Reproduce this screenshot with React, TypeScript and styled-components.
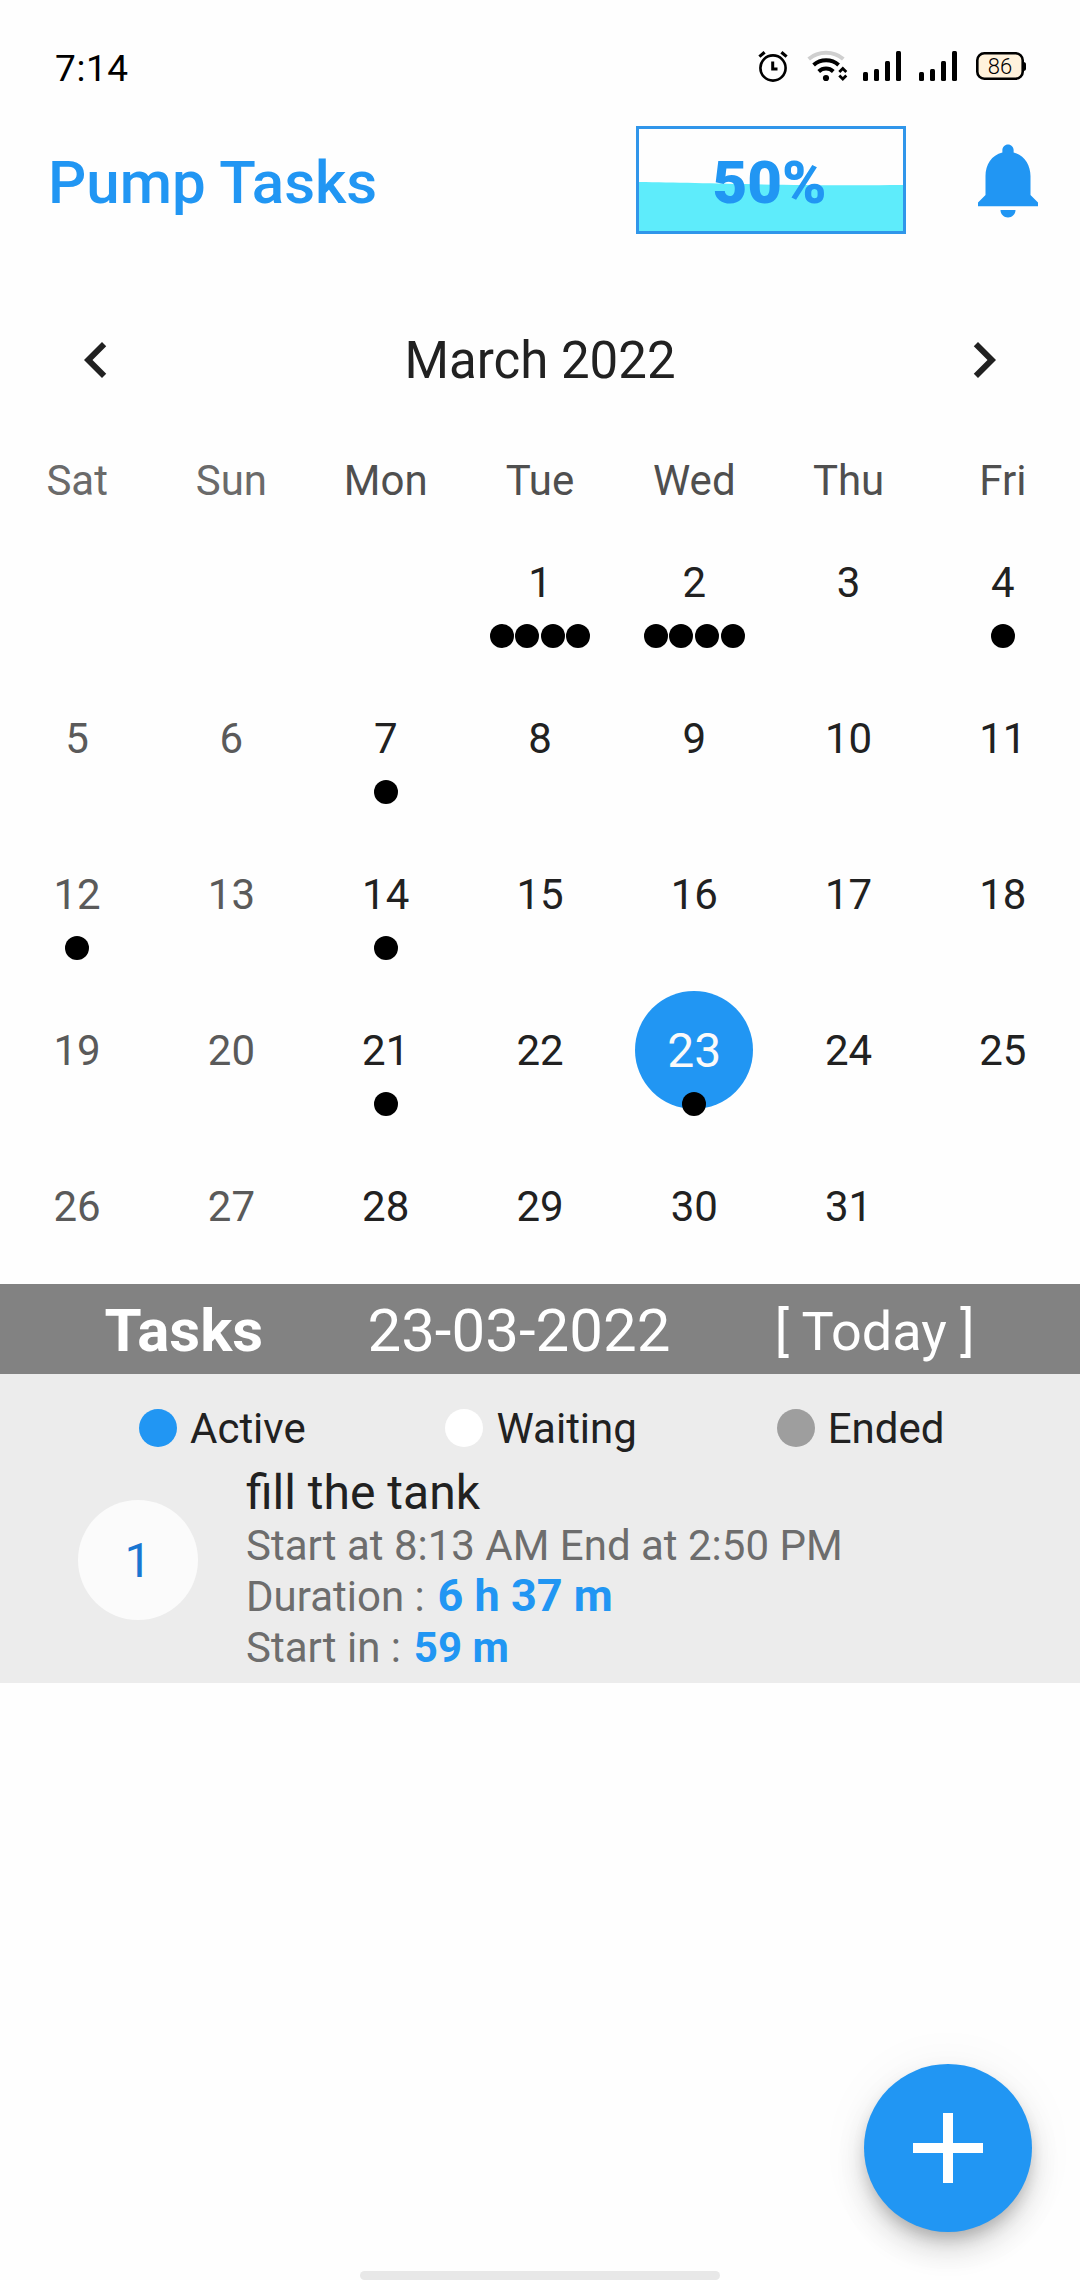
import React from 'react';
import styled, { createGlobalStyle } from 'styled-components';

const BLUE = '#2196f3';
const INK = '#212121';

const GlobalStyle = createGlobalStyle`
  * { box-sizing: border-box; }
  body { margin: 0; background: #fefefe; font-family: Roboto, "Liberation Sans", sans-serif; }
`;

const Screen = styled.div`
  position: relative;
  display: flex;
  flex-direction: column;
  width: 1080px;
  height: 2280px;
  overflow: hidden;
  background: #fefefe;
  color: ${INK};
`;

const StatusBar = styled.header`
  display: flex;
  align-items: flex-start;
  justify-content: space-between;
  height: 90px;
  padding: 45px 54px 0 55px;
  color: #000;
`;

const Clock = styled.span`
  margin-top: 1px;
  font-size: 37px;
  line-height: 45px;
  letter-spacing: 0.6px;
`;

const StatusIcons = styled.svg`
  display: block;
  width: 272px;
  height: 40px;
`;

const BatteryLevel = styled.text`
  font-family: Roboto, sans-serif;
  font-size: 22px;
  font-weight: 300;
`;

const AppBar = styled.div`
  display: flex;
  align-items: center;
  height: 180px;
  padding: 0 27px 0 48px;
`;

const Title = styled.h1`
  flex: 1;
  margin: 6px 0 0;
  font-size: 60px;
  line-height: 70px;
  font-weight: 500;
  color: ${BLUE};
`;

const Gauge = styled.div`
  display: grid;
  width: 270px;
  height: 108px;
  border: 3px solid #3096ea;
  > * { grid-area: 1 / 1; }
`;

const Water = styled.svg`
  display: block;
  width: 264px;
  height: 102px;
`;

const GaugeValue = styled.span`
  place-self: center;
  margin: 5px 3px 0 0;
  font-size: 60px;
  line-height: 70px;
  font-weight: 900;
  color: ${BLUE};
`;

const Bell = styled.svg`
  display: block;
  width: 90px;
  height: 90px;
  margin-left: 57px;
  fill: ${BLUE};
`;

const MonthBar = styled.div`
  display: flex;
  align-items: center;
  justify-content: space-between;
  height: 180px;
  padding: 0 60px;
`;

const MonthName = styled.h2`
  margin: 1px 0 0;
  font-size: 51px;
  line-height: 60px;
  font-weight: 400;
`;

const Chevron = styled.svg`
  display: block;
  width: 72px;
  height: 72px;
  fill: ${INK};
`;

const Week = styled.div`
  display: grid;
  grid-template-columns: repeat(7, 1fr);
`;

const Weekday = styled.span<{ $weekend: boolean }>`
  height: 54px;
  font-size: 42px;
  line-height: 62px;
  text-align: center;
  color: ${(p) => (p.$weekend ? '#6a6a6a' : '#4f4f4f')};
`;

const DayCell = styled.div`
  position: relative;
  display: flex;
  align-items: center;
  justify-content: center;
  height: 156px;
`;

const DayNumber = styled.span<{ $weekend: boolean; $selected: boolean }>`
  display: flex;
  align-items: center;
  justify-content: center;
  width: 118.3px;
  height: 118.3px;
  padding-top: 2px;
  border-radius: 50%;
  font-size: ${(p) => (p.$selected ? 48 : 42)}px;
  background: ${(p) => (p.$selected ? BLUE : 'transparent')};
  color: ${(p) => (p.$selected ? '#fafafa' : p.$weekend ? '#5a5a5a' : INK)};
`;

const Markers = styled.div`
  position: absolute;
  left: 0;
  right: 0;
  bottom: 12px;
  display: flex;
  justify-content: center;
  gap: 1.6px;
`;

const Marker = styled.span`
  width: 24px;
  height: 24px;
  border-radius: 50%;
  background: #000;
`;

const TasksBar = styled.div`
  display: flex;
  align-items: center;
  justify-content: space-evenly;
  height: 90px;
  padding: 4px 1px 0 0;
  background: #828282;
  color: #fff;
`;

const TasksLabel = styled.strong`
  font-size: 60px;
  line-height: 70px;
  font-weight: 700;
`;

const TasksDate = styled.span`
  font-size: 60px;
  line-height: 70px;
`;

const TodayLabel = styled.span`
  font-size: 54px;
  line-height: 63px;
`;

const TaskPanel = styled.section`
  display: flex;
  flex-direction: column;
  height: 309px;
  background: #ececec;
`;

const Legend = styled.div`
  display: flex;
  gap: 139.8px;
  height: 89px;
  padding: 29px 0 0 139px;
`;

const LegendItem = styled.div`
  display: flex;
  align-items: center;
  gap: 13px;
  height: 50px;
  font-size: 42px;
  line-height: 50px;
`;

const LegendLabel = styled.span`
  padding-top: 2px;
`;

const LegendDot = styled.span<{ $color: string }>`
  width: 38px;
  height: 38px;
  border-radius: 50%;
  background: ${(p) => p.$color};
`;

const TaskRow = styled.article`
  display: flex;
  align-items: flex-start;
  gap: 48px;
  padding-left: 78px;
`;

const TaskIndex = styled.span`
  display: flex;
  align-items: center;
  justify-content: center;
  width: 120px;
  height: 120px;
  margin-top: 37px;
  border-radius: 50%;
  background: #fbfbfb;
  font-size: 48px;
  color: #1976d2;
`;

const TaskText = styled.div`
  display: flex;
  flex-direction: column;
`;

const TaskName = styled.h3`
  height: 57px;
  margin: 0;
  font-size: 48px;
  line-height: 59px;
  font-weight: 400;
`;

const TaskLine = styled.p`
  margin: 0;
  height: 51px;
  font-size: 42px;
  line-height: 51px;
  white-space: pre;
  color: #6d6d6d;
`;

const Highlight = styled.strong<{ $size: number }>`
  margin-left: 2.5px;
  font-size: ${(p) => p.$size}px;
  line-height: 1;
  font-weight: 700;
  color: ${BLUE};
`;

const AddButton = styled.button`
  position: absolute;
  right: 48px;
  bottom: 48px;
  display: flex;
  align-items: center;
  justify-content: center;
  width: 168px;
  height: 168px;
  padding: 0;
  border: 0;
  border-radius: 50%;
  background: ${BLUE};
  box-shadow: 0 9px 15px -3px rgba(0, 0, 0, 0.2), 0 18px 30px rgba(0, 0, 0, 0.14), 0 3px 54px rgba(0, 0, 0, 0.05);
`;

const PlusIcon = styled.svg`
  display: block;
  width: 70px;
  height: 70px;
  fill: #fff;
`;

const HomeIndicator = styled.div`
  position: absolute;
  left: 360px;
  bottom: 0;
  width: 360px;
  height: 9px;
  border-radius: 4.5px;
  background: #e8e8e8;
`;

const WEEKDAYS = ['Sat', 'Sun', 'Mon', 'Tue', 'Wed', 'Thu', 'Fri'];
const LEADING_BLANKS = 3;
const DAYS_IN_MONTH = 31;
const SELECTED_DAY = 23;
const EVENTS: Record<number, number> = { 1: 4, 2: 4, 4: 1, 7: 1, 12: 1, 14: 1, 21: 1, 23: 1 };

const CELLS = Array.from({ length: 35 }, (_, i) => {
  const day = i - LEADING_BLANKS + 1;
  return day >= 1 && day <= DAYS_IN_MONTH ? day : null;
});

const LEGEND = [
  { label: 'Active', color: BLUE },
  { label: 'Waiting', color: '#ffffff' },
  { label: 'Ended', color: '#9e9e9e' },
];

function SignalBars({ x }: { x: number }) {
  return (
    <g>
      <rect x={x} y="27" width="5" height="9" rx="1.5" />
      <rect x={x + 11} y="24" width="5" height="12" rx="1.5" />
      <rect x={x + 22} y="16" width="5" height="20" rx="1.5" />
      <rect x={x + 33} y="6" width="5" height="30" rx="1.5" />
    </g>
  );
}

function StatusGlyphs() {
  return (
    <StatusIcons viewBox="0 0 272 40">
      <g fill="none" stroke="#000">
        <circle cx="19" cy="23" r="12.6" strokeWidth="2.6" />
        <path d="M18.7 16.5V24H23.5" strokeWidth="3" />
        <path d="M5.4 11.6L10.6 7.2M32.6 11.6L27.4 7.2" strokeWidth="3.2" />
      </g>
      <g fill="none">
        <path d="M54.7 14C64.5 5.8 79.5 5.8 89.3 14" stroke="#cfcfcf" strokeWidth="4" />
        <path d="M59.6 20C66.6 13.8 77.6 13.8 84.6 20" stroke="#000" strokeWidth="4" />
        <path d="M64.7 26.4C69 22.5 75 22.5 79.3 26.4" stroke="#000" strokeWidth="4" />
        <path d="M85.3 27L88.8 23.5L92.3 27M85.3 30.6L88.8 34.1L92.3 30.6" stroke="#000" strokeWidth="2.8" />
      </g>
      <circle cx="72" cy="33" r="3.1" />
      <SignalBars x={109} />
      <SignalBars x={165} />
      <rect x="223.3" y="8.3" width="45.4" height="25.4" rx="7" fill="#fff2dc" stroke="#000" strokeWidth="2.6" />
      <path d="M269.5 17C271.3 17.3 272 18 272 19.5V23.5C272 25 271.3 25.7 269.5 26Z" />
      <BatteryLevel x="246" y="28.6" textAnchor="middle">86</BatteryLevel>
    </StatusIcons>
  );
}

function Calendar() {
  return (
    <>
      <MonthBar>
        <Chevron viewBox="0 0 24 24">
          <path d="M15.41 7.41L14 6l-6 6 6 6 1.41-1.41L10.83 12z" />
        </Chevron>
        <MonthName>March 2022</MonthName>
        <Chevron viewBox="0 0 24 24">
          <path d="M10 6L8.59 7.41 13.17 12l-4.58 4.59L10 18l6-6z" />
        </Chevron>
      </MonthBar>
      <Week>
        {WEEKDAYS.map((name, i) => (
          <Weekday key={name} $weekend={i < 2}>{name}</Weekday>
        ))}
      </Week>
      <Week>
        {CELLS.map((day, i) => (
          <DayCell key={i}>
            {day && (
              <DayNumber $weekend={i % 7 < 2} $selected={day === SELECTED_DAY}>{day}</DayNumber>
            )}
            {day && EVENTS[day] && (
              <Markers>
                {Array.from({ length: EVENTS[day] }, (_, n) => <Marker key={n} />)}
              </Markers>
            )}
          </DayCell>
        ))}
      </Week>
    </>
  );
}

export default function App() {
  return (
    <Screen>
      <GlobalStyle />
      <StatusBar>
        <Clock>7:14</Clock>
        <StatusGlyphs />
      </StatusBar>
      <AppBar>
        <Title>Pump Tasks</Title>
        <Gauge>
          <Water viewBox="0 0 264 102">
            <path d="M0 53C60 53.5 130 57 264 56V102H0Z" fill="#5eecfb" />
          </Water>
          <GaugeValue>50%</GaugeValue>
        </Gauge>
        <Bell viewBox="0 0 24 24">
          <path d="M12 22c1.1 0 2-.9 2-2h-4c0 1.1.89 2 2 2zm6-6v-5c0-3.07-1.64-5.64-4.5-6.32V4c0-.83-.67-1.5-1.5-1.5s-1.5.67-1.5 1.5v.68C7.63 5.36 6 7.92 6 11v5l-2 2v1h16v-1l-2-2z" />
        </Bell>
      </AppBar>
      <Calendar />
      <TasksBar>
        <TasksLabel>Tasks</TasksLabel>
        <TasksDate>23-03-2022</TasksDate>
        <TodayLabel>[ Today ]</TodayLabel>
      </TasksBar>
      <TaskPanel>
        <Legend>
          {LEGEND.map(({ label, color }) => (
            <LegendItem key={label}>
              <LegendDot $color={color} />
              <LegendLabel>{label}</LegendLabel>
            </LegendItem>
          ))}
        </Legend>
        <TaskRow>
          <TaskIndex>1</TaskIndex>
          <TaskText>
            <TaskName>fill the tank</TaskName>
            <TaskLine>Start at 8:13 AM End at 2:50 PM</TaskLine>
            <TaskLine>Duration : <Highlight $size={45}>6 h 37 m</Highlight></TaskLine>
            <TaskLine>Start in : <Highlight $size={42}>59 m</Highlight></TaskLine>
          </TaskText>
        </TaskRow>
      </TaskPanel>
      <AddButton aria-label="Add task">
        <PlusIcon viewBox="0 0 70 70">
          <path d="M30 0h10v30h30v10H40v30H30V40H0V30h30z" />
        </PlusIcon>
      </AddButton>
      <HomeIndicator />
    </Screen>
  );
}
